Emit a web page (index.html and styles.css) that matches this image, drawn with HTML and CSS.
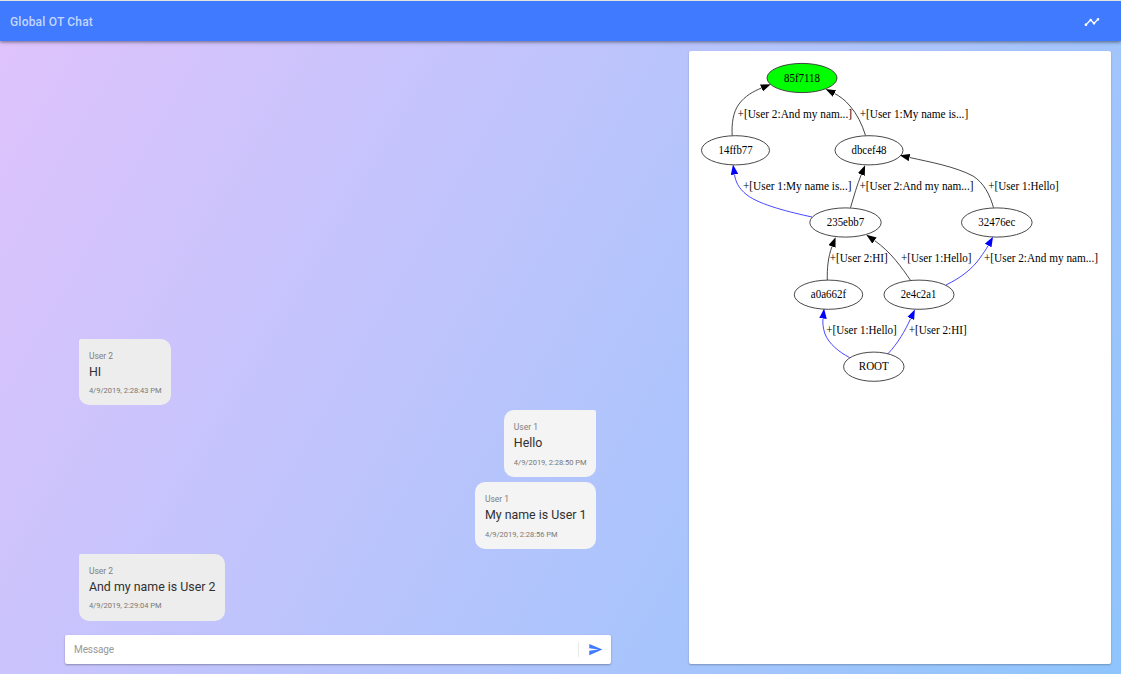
FILE: index.html
```html
<!DOCTYPE html>
<html lang="en">
<head>
<meta charset="utf-8">
<title>Global OT Chat</title>
<link rel="stylesheet" href="styles.css">
</head>
<body>
<div class="app">
  <header class="toolbar">
    <h1 class="title">Global OT Chat</h1>
    <svg class="timeline-icon" viewBox="0 0 24 24" aria-hidden="true"><path d="M23 8c0 1.100-.9 2-2 2-.18 0-.35-.02-.51-.07l-3.560 3.550c.05.16.07.34.07.52 0 1.100-.9 2-2 2s-2-.9-2-2c0-.18.02-.36.07-.52l-2.550-2.550c-.16.05-.34.07-.52.07s-.36-.02-.52-.07l-4.550 4.560c.05.16.07.33.07.51 0 1.100-.9 2-2 2s-2-.9-2-2 .9-2 2-2c.18 0 .35.02.51.07l4.560-4.550C8.020 9.360 8 9.180 8 9c0-1.100.9-2 2-2s2 .9 2 2c0 .18-.02.36-.07.52l2.550 2.550c.16-.05.34-.07.52-.07s.36.02.52.07l3.550-3.560C19.020 8.350 19 8.180 19 8c0-1.100.9-2 2-2s2 .9 2 2z"/></svg>
  </header>
  <main class="content">
    <section class="chat">
      <div class="messages">
        <article class="bubble theirs">
          <div class="author">User 2</div><div class="text">HI</div><div class="time">4/9/2019, 2:28:43 PM</div>
        </article>
        <article class="bubble mine">
          <div class="author">User 1</div><div class="text">Hello</div><div class="time">4/9/2019, 2:28:50 PM</div>
        </article>
        <article class="bubble mine followup">
          <div class="author">User 1</div><div class="text">My name is User 1</div><div class="time">4/9/2019, 2:28:56 PM</div>
        </article>
        <article class="bubble theirs">
          <div class="author">User 2</div><div class="text">And my name is User 2</div><div class="time">4/9/2019, 2:29:04 PM</div>
        </article>
      </div>
      <div class="composer">
        <span class="placeholder">Message</span>
        <span class="divider"></span>
        <svg class="send-icon" viewBox="0 0 24 24" aria-hidden="true"><path d="M2.010 21L23 12 2.010 3 2 10l15 2-15 2z"/></svg>
      </div>
    </section>
    <aside class="graph-card">
      <svg class="graph" viewBox="689 51 422 613">
        <defs>
          <marker id="arrow" class="arrow" viewBox="0 0 10 7" refX="0" refY="3.500" markerWidth="10" markerHeight="7.500" markerUnits="userSpaceOnUse" orient="auto" preserveAspectRatio="none"><path d="M0 0L10 3.500 0 7z"/></marker>
          <marker id="arrow-blue" class="arrow-blue" viewBox="0 0 10 7" refX="0" refY="3.500" markerWidth="10" markerHeight="7.500" markerUnits="userSpaceOnUse" orient="auto" preserveAspectRatio="none"><path d="M0 0L10 3.500 0 7z"/></marker>
        </defs>
        <g class="edge">
          <path d="M732.200 135.500C731.500 124 733 112 739 104C745 96 753 91.500 761.500 88"/>
          <path d="M865.500 135.500C862 124 857 114 850 106C845 100 839.500 96 834.500 93.500"/>
          <path d="M850.500 207.700C854 196 857 185 861.300 174.500"/>
          <path d="M993.500 207.700C990 195 984 183 973 176C955 166.500 930 162 909.500 157.500"/>
          <path d="M827.300 280C827 269 828 257 832 246.500"/>
          <path d="M910.500 280.300C902 268 891 252 874.500 240.500"/>
        </g>
        <g class="edge blue">
          <path d="M812 217C791 212.500 760 205 747 195C738 188 735.500 181 734.500 174.500"/>
          <path d="M946 285C962 277 972 269 980 258C983.500 253 986 249.500 988.200 245.500"/>
          <path d="M849.500 357.500C839 352 829 344 825 334C823 328 822.500 323 823 318.500"/>
          <path d="M888 353.700C898 343 905 331 910.700 318.500"/>
        </g>
        <g class="node">
          <ellipse class="current" cx="802" cy="78" rx="35" ry="14.600"/>
          <ellipse cx="735.500" cy="150.300" rx="34" ry="14.600"/>
          <ellipse cx="869" cy="150.300" rx="34" ry="14.600"/>
          <ellipse cx="845.500" cy="222.500" rx="35.700" ry="14.600"/>
          <ellipse cx="996.800" cy="222.500" rx="35.300" ry="14.600"/>
          <ellipse cx="828.500" cy="294.700" rx="34.200" ry="14.600"/>
          <ellipse cx="919" cy="294.700" rx="35" ry="14.600"/>
          <ellipse cx="873.800" cy="366.700" rx="30.200" ry="14.600"/>
        </g>
        <g class="node-label">
          <text x="802" y="82" textLength="36" lengthAdjust="spacingAndGlyphs">85f7118</text>
          <text x="735.600" y="154" textLength="34" lengthAdjust="spacingAndGlyphs">14ffb77</text>
          <text x="869" y="154" textLength="35" lengthAdjust="spacingAndGlyphs">dbcef48</text>
          <text x="845.500" y="226.300" textLength="37.500" lengthAdjust="spacingAndGlyphs">235ebb7</text>
          <text x="996.800" y="226.300" textLength="37" lengthAdjust="spacingAndGlyphs">32476ec</text>
          <text x="828.500" y="298.400" textLength="35.500" lengthAdjust="spacingAndGlyphs">a0a662f</text>
          <text x="918.500" y="298.400" textLength="35.500" lengthAdjust="spacingAndGlyphs">2e4c2a1</text>
          <text x="873.800" y="370.400" textLength="30" lengthAdjust="spacingAndGlyphs">ROOT</text>
        </g>
        <g class="edge-label">
          <text x="737.500" y="118" textLength="114.500" lengthAdjust="spacingAndGlyphs">+[User 2:And my nam...]</text>
          <text x="859.700" y="118" textLength="108.500" lengthAdjust="spacingAndGlyphs">+[User 1:My name is...]</text>
          <text x="743" y="190" textLength="108.500" lengthAdjust="spacingAndGlyphs">+[User 1:My name is...]</text>
          <text x="859.500" y="190" textLength="114" lengthAdjust="spacingAndGlyphs">+[User 2:And my nam...]</text>
          <text x="988.300" y="190" textLength="70.500" lengthAdjust="spacingAndGlyphs">+[User 1:Hello]</text>
          <text x="829.800" y="262.300" textLength="58" lengthAdjust="spacingAndGlyphs">+[User 2:HI]</text>
          <text x="901" y="262.300" textLength="70.500" lengthAdjust="spacingAndGlyphs">+[User 1:Hello]</text>
          <text x="984" y="262.300" textLength="114" lengthAdjust="spacingAndGlyphs">+[User 2:And my nam...]</text>
          <text x="826.300" y="334.400" textLength="70.500" lengthAdjust="spacingAndGlyphs">+[User 1:Hello]</text>
          <text x="908.700" y="334.400" textLength="58" lengthAdjust="spacingAndGlyphs">+[User 2:HI]</text>
        </g>
      </svg>
    </aside>
  </main>
</div>
</body>
</html>
```

FILE: styles.css
```css
* { box-sizing: border-box; }
body { margin: 0; font-family: Roboto, sans-serif; }
.app {
  display: flex;
  flex-direction: column;
  height: 674px;
  border-top: 1px solid #e6e4e3;
  background: linear-gradient(120deg, #e0c3fc 0%, #8ec5fc 100%) padding-box;
  overflow: hidden;
}
.toolbar {
  display: flex;
  align-items: center;
  justify-content: space-between;
  flex: none;
  height: 40px;
  padding: 1px 21px 0 10px;
  background: #3f7aff;
  box-shadow: 0 1px 3px rgba(0, 0, 0, .4), 0 1px 5px rgba(0, 0, 0, .15);
}
.title {
  margin: 0;
  font-size: 12px;
  font-weight: 500;
  line-height: 16px;
  letter-spacing: .2px;
  color: rgba(255, 255, 255, .7);
}
.timeline-icon { width: 16px; height: 16px; fill: #fff; }
.content {
  flex: 1;
  display: grid;
  grid-template-columns: 546px 422px;
  justify-content: space-between;
  padding: 10px 10px 10px 65px;
}
.chat { display: flex; flex-direction: column; justify-content: flex-end; }
.messages {
  display: flex;
  flex-direction: column;
  gap: 5px;
  padding: 0 15px 0 14.400px;
  margin-bottom: 14.500px;
}
.bubble {
  height: 66.700px;
  padding: 10px 9.500px 0;
  border-radius: 10px;
}
.theirs { align-self: flex-start; background: #ededed; border-top-left-radius: 2px; }
.mine { align-self: flex-end; background: #f4f4f4; border-top-right-radius: 2px; }
.followup { border-top-right-radius: 10px; }
.author { font-size: 8.500px; line-height: 14px; color: #808080; }
.text { font-size: 12.400px; line-height: 18.500px; color: #303030; }
.time { font-size: 7.500px; line-height: 19px; color: #777; white-space: nowrap; }
.composer {
  display: flex;
  align-items: center;
  height: 29px;
  padding: 0 8px 0 9px;
  border-radius: 2px;
  background: #fff;
  box-shadow: 0 1px 2px rgba(0, 0, 0, .3);
}
.placeholder { flex: 1; font-size: 10px; letter-spacing: -.1px; color: #999; }
.divider { width: 1px; height: 15px; margin-right: 9px; background: #e9e9e9; }
.send-icon { width: 15px; height: 15px; fill: #3f7aff; }
.graph-card { border-radius: 2px; background: #fff; box-shadow: 0 1px 2px rgba(0, 0, 0, .25); }
.graph { display: block; width: 422px; height: 613px; }
.edge path { fill: none; stroke: #333; stroke-width: .9; marker-end: url(#arrow); }
.edge.blue path { stroke: #33f; marker-end: url(#arrow-blue); }
.arrow path { fill: #000; }
.arrow-blue path { fill: #00f; }
.node ellipse { fill: none; stroke: #333; stroke-width: .9; }
.node .current { fill: #0f0; }
.graph text { font-family: "Liberation Serif", "Times New Roman", serif; font-size: 12px; fill: #000; }
.node-label text { text-anchor: middle; }
```
